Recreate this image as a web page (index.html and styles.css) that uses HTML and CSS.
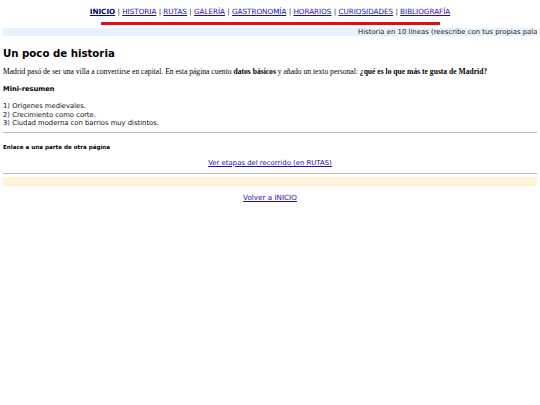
FILE: index.html
```html
<!DOCTYPE html>
<html lang="es">
<head>
<meta charset="utf-8">
<title>Historia</title>
<link rel="stylesheet" href="styles.css">
</head>
<body>
<nav class="nav">
  <a class="current" href="#">INICIO</a> | <a href="#">HISTORIA</a> | <a href="#">RUTAS</a> | <a href="#">GALERÍA</a> | <a href="#">GASTRONOMÍA</a> | <a href="#">HORARIOS</a> | <a href="#">CURIOSIDADES</a> | <a href="#">BIBLIOGRAFÍA</a>
</nav>
<div class="redbar"></div>
<div class="ticker"><span class="ticker-text">Historia en 10 líneas (reescribe con tus propias palabras)</span></div>
<h2 class="title">Un poco de historia</h2>
<p class="intro">Madrid pasó de ser una villa a convertirse en capital. En esta página cuento <b>datos básicos</b> y añado un texto personal: <b>¿qué es lo que más te gusta de Madrid?</b></p>
<h3 class="sub">Mini-resumen</h3>
<p class="list">1) Orígenes medievales.<br>2) Crecimiento como corte.<br>3) Ciudad moderna con barrios muy distintos.</p>
<hr class="rule">
<h4 class="small-head">Enlace a una parte de otra página</h4>
<p class="center link"><a href="#">Ver etapas del recorrido (en RUTAS)</a></p>
<hr class="rule rule2">
<div class="yellow"></div>
<p class="center back"><a href="#">Volver a INICIO</a></p>
</body>
</html>
```
FILE: styles.css
```css
html, body { margin: 0; padding: 0; background: #fff; }
body { padding: 0 3px; font-family: "DejaVu Sans", Verdana, sans-serif; color: #000; }
a { color: #1a0dab; }
.nav { text-align: center; font-size: 7.2px; line-height: 10px; padding-top: 7px; color: #333; }
.nav a { color: #1a0dab; }
.nav a.current { font-weight: bold; color: #00008b; }
.redbar { width: 339px; height: 3px; background: #e01010; margin: 5px auto 0; }
.ticker { margin-top: 3px; height: 8px; background: #e8f2fc; overflow: hidden; white-space: nowrap; font-size: 6.9px; line-height: 8px; color: #222; }
.ticker-text { display: inline-block; padding-left: 355px; }
.title { font-size: 10.2px; font-weight: bold; margin: 11px 0 0; line-height: 13px; }
.intro { font-family: "Liberation Serif", Georgia, serif; font-size: 7.6px; margin: 7px 0 0; line-height: 9px; }
.sub { font-size: 6.7px; font-weight: bold; margin: 9px 0 0; line-height: 9px; }
.list { font-size: 6.8px; line-height: 8.5px; margin: 8px 0 0; color: #111; }
.rule { border: 0; border-top: 1px solid #bbb; margin: 4px 0 0; }
.small-head { font-size: 5.6px; font-weight: bold; margin: 10px 0 0; line-height: 8px; }
.center { text-align: center; font-size: 6.9px; line-height: 9px; margin: 8px 0 0; }
.rule2 { margin-top: 5px; }
.yellow { height: 9px; background: #fff3d6; margin-top: 3px; }
.back { margin-top: 7px; font-size: 7.2px; }
```
